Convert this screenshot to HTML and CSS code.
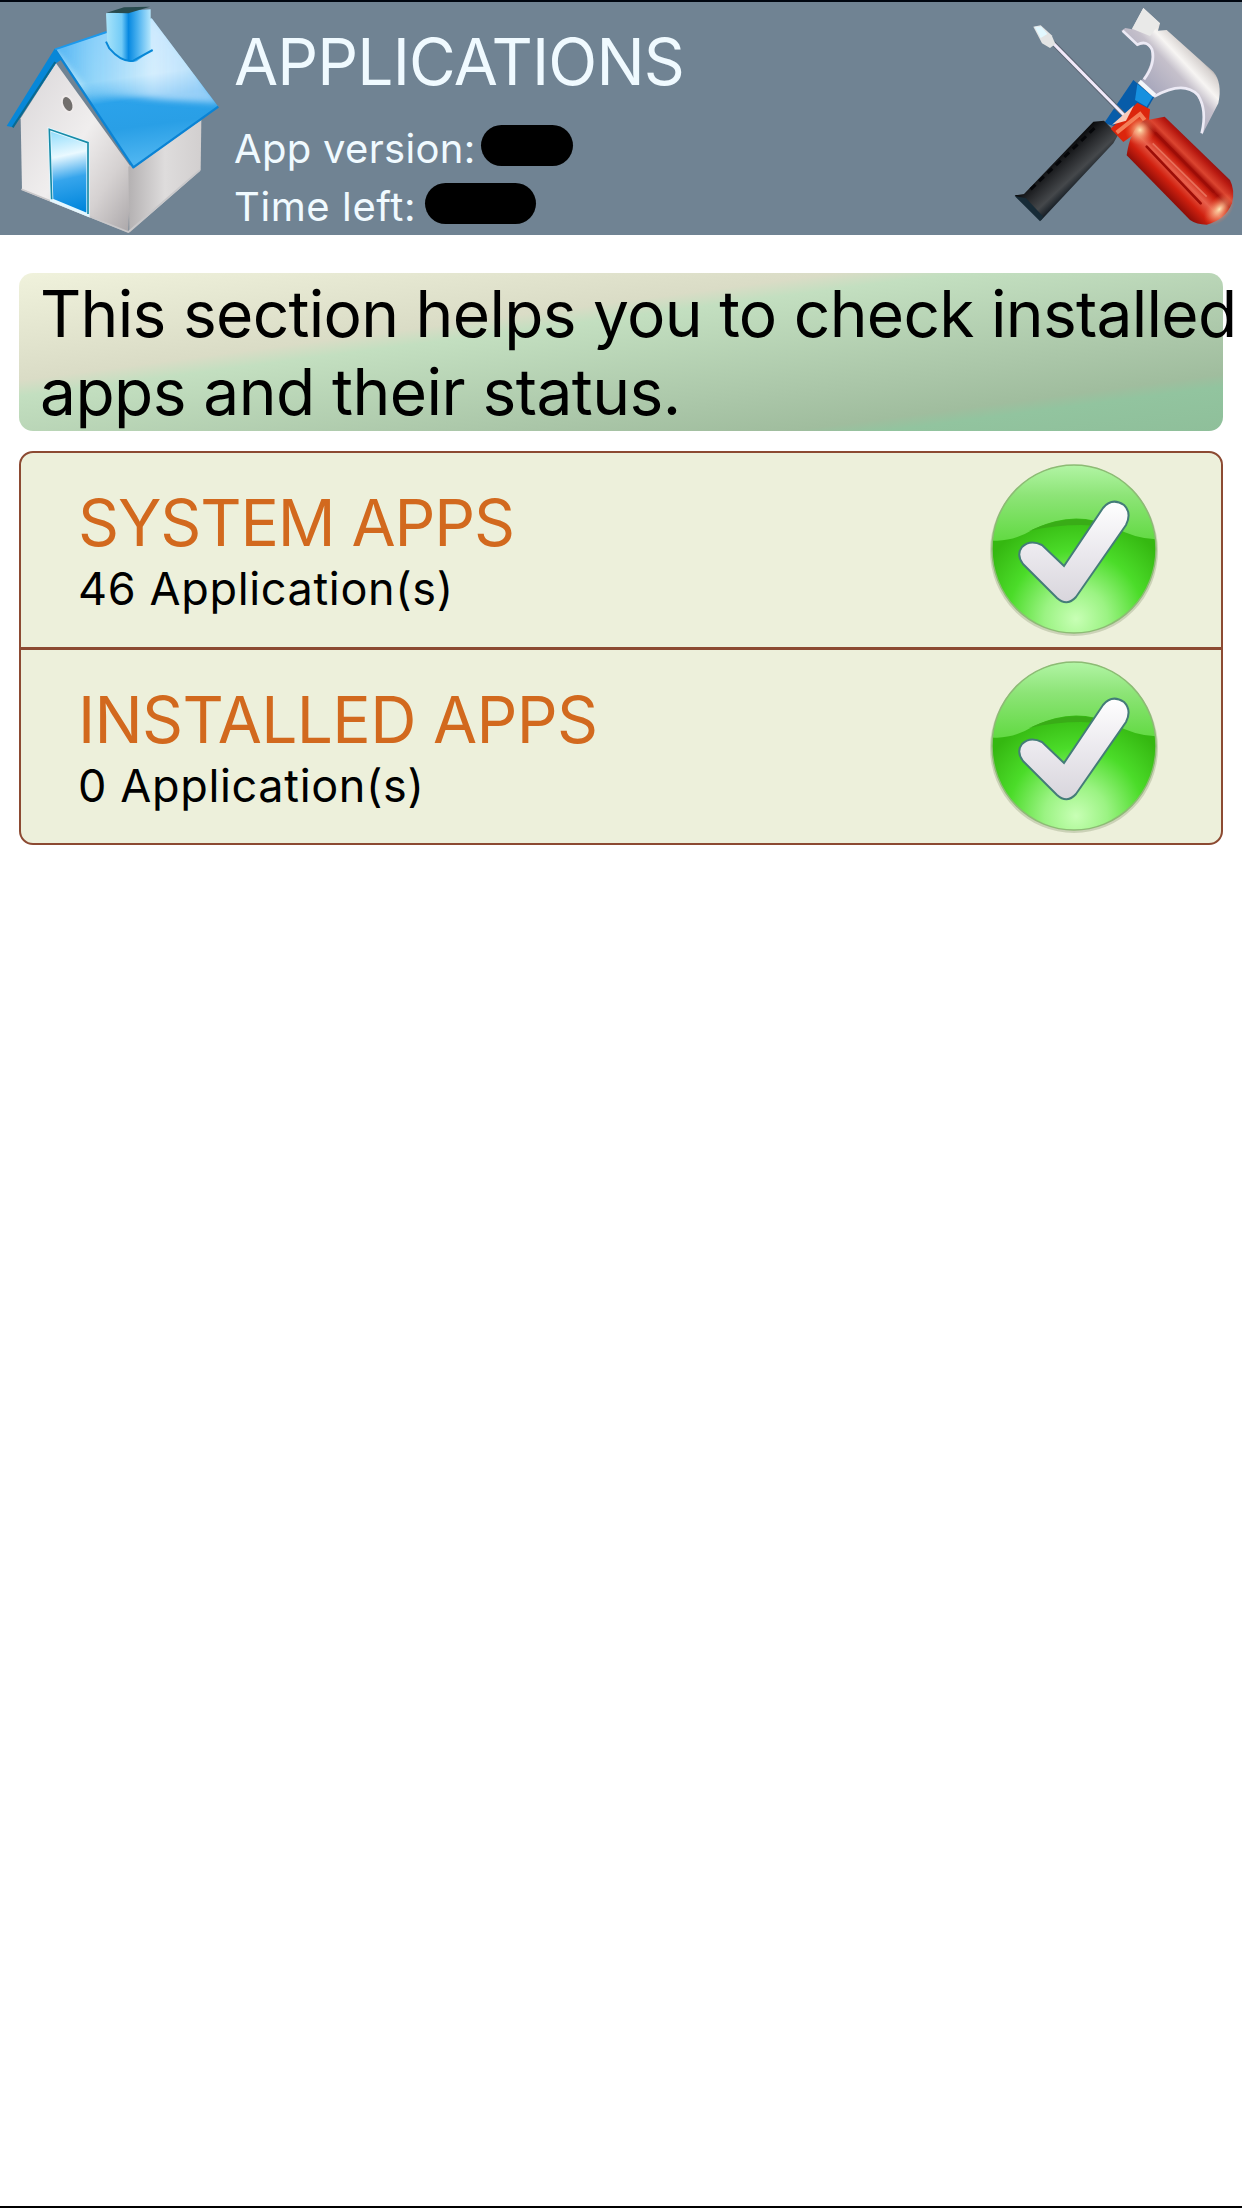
FILE: index.html
```
<!DOCTYPE html>
<html lang="en">
<head>
<meta charset="utf-8">
<title>Applications</title>
<link rel="stylesheet" href="styles.css">
</head>
<body>
<header class="header">
  <svg class="home" viewBox="0 6 690 699" aria-label="Home">
    <defs>
      <linearGradient id="roof" x1="0" y1="0" x2="0.15" y2="1">
        <stop offset="0" stop-color="#8fd6fb"/><stop offset=".2" stop-color="#a5dcfb"/><stop offset=".45" stop-color="#b4e5fa"/><stop offset=".6" stop-color="#2ba2ea"/><stop offset=".78" stop-color="#299fe6"/><stop offset="1" stop-color="#4cb4f0"/>
      </linearGradient>
      <linearGradient id="shine" x1="0" y1="0" x2="1" y2="0">
        <stop offset="0" stop-color="#2aa0ee"/><stop offset=".25" stop-color="#6cc3f7" stop-opacity=".6"/><stop offset=".6" stop-color="#e8f3ff" stop-opacity=".8"/><stop offset="1" stop-color="#a5d5fa"/>
      </linearGradient>
      <linearGradient id="front" x1="0" y1="0" x2="1" y2="1">
        <stop offset="0" stop-color="#d9d6d8"/><stop offset=".5" stop-color="#f0eeee"/><stop offset=".75" stop-color="#d5d1d1"/><stop offset="1" stop-color="#aaa6a8"/>
      </linearGradient>
      <linearGradient id="side" x1="0" y1="0" x2="1" y2="0">
        <stop offset="0" stop-color="#b4b1b2"/><stop offset=".5" stop-color="#dedcdc"/><stop offset="1" stop-color="#d2cfcf"/>
      </linearGradient>
      <linearGradient id="door" x1="0.2" y1="0" x2="0.3" y2="1">
        <stop offset="0" stop-color="#8fdcfb"/><stop offset=".32" stop-color="#eaf9ff"/><stop offset=".6" stop-color="#36a5ec"/><stop offset="1" stop-color="#0086dc"/>
      </linearGradient>
      <linearGradient id="stack" x1="0" y1="0" x2="1" y2="0">
        <stop offset="0" stop-color="#a9e4fa"/><stop offset=".35" stop-color="#72cbf7"/><stop offset=".5" stop-color="#0789e1"/><stop offset=".7" stop-color="#49b0ef"/><stop offset="1" stop-color="#b8e8fd"/>
      </linearGradient>
      <filter id="soft"><feGaussianBlur stdDeviation="9"/></filter>
      <clipPath id="roofClip"><path d="M165 148 455 55 655 320 400 505Z"/></clipPath>
    </defs>
    <path d="M168 190 62 355 66 570 385 698 392 500Z" fill="url(#front)"/>
    <path d="M385 500 604 360 602 510 388 698Z" fill="url(#side)"/>
    <path d="M64 568 385 696 600 510" fill="none" stroke="#c9c8ca" stroke-width="5"/>
    <path d="M165 148 455 55 655 320 400 505Z" fill="url(#roof)"/>
    <g clip-path="url(#roofClip)">
      <path d="M150 130 330 80 455 40 660 310 500 300 270 280Z" fill="url(#shine)" opacity=".8" filter="url(#soft)"/>
    </g>
    <path d="M165 148 400 502 655 320" fill="none" stroke="#0b83d4" stroke-width="7" stroke-linejoin="round"/>
    <path d="M165 148 320 96" stroke="#1c99ec" stroke-width="6"/>
    <path d="M164 146 186 178 168 190 40 382 20 378Z" fill="#0787d8"/>
    <path d="M166 186 38 382" stroke="#096a91" stroke-width="6"/>
    <path d="M318 40 385 32 452 28 452 145Q460 150 410 184Q385 190 360 172L322 135Z" fill="url(#stack)"/>
    <path d="M320 38 372 22 450 20 385 40Z" fill="#284b4e"/>
    <path d="M318 125 328 145Q365 188 400 182L458 150" fill="none" stroke="#0787d7" stroke-width="6"/>
    <ellipse cx="203" cy="312" rx="16" ry="25" transform="rotate(-22 203 312)" fill="#716e6c" stroke="#eeeaea" stroke-width="6"/>
    <path d="M148 388 264 428 264 645 155 600Z" fill="url(#door)" stroke="#e4f7ff" stroke-width="10"/>
    <path d="M155 598 148 388 264 428 264 642" fill="none" stroke="#178ba7" stroke-width="5"/>
  </svg>
  <div class="heading">
    <h1 class="title">APPLICATIONS</h1>
    <p class="meta meta-version">App version:<i class="mask"></i></p>
    <p class="meta meta-time">Time left:<i class="mask"></i></p>
  </div>
  <svg class="tools" viewBox="0 6 726 699" aria-label="Tools">
    <defs>
      <linearGradient id="steel" gradientUnits="userSpaceOnUse" x1="450" y1="260" x2="590" y2="130">
        <stop offset="0" stop-color="#aaa9bd"/><stop offset=".45" stop-color="#c5c0cb"/><stop offset=".65" stop-color="#f7f5f3"/><stop offset=".85" stop-color="#d6d1cf"/><stop offset="1" stop-color="#77706f"/>
      </linearGradient>
      <linearGradient id="red" gradientUnits="userSpaceOnUse" x1="470" y1="560" x2="600" y2="430">
        <stop offset="0" stop-color="#8b0d08"/><stop offset=".2" stop-color="#d0200f"/><stop offset=".38" stop-color="#e8604c"/><stop offset=".52" stop-color="#cc2312"/><stop offset=".6" stop-color="#a00c07"/><stop offset=".7" stop-color="#dc4530"/><stop offset=".85" stop-color="#b81910"/><stop offset="1" stop-color="#780b12"/>
      </linearGradient>
      <linearGradient id="grip" gradientUnits="userSpaceOnUse" x1="170" y1="470" x2="245" y2="550">
        <stop offset="0" stop-color="#0a0b0d"/><stop offset=".35" stop-color="#292b2e"/><stop offset=".7" stop-color="#45484b"/><stop offset="1" stop-color="#101820"/>
      </linearGradient>
      <radialGradient id="glint"><stop offset="0" stop-color="#ffe9b8"/><stop offset="1" stop-color="#f26a43" stop-opacity="0"/></radialGradient>
    </defs>
    <path d="M430 24 480 70 474 92 500 90 640 215Q668 248 655 310L606 405Q624 330 585 280Q540 240 460 292L420 248Q464 190 452 148Q442 126 412 138L364 92 376 84 396 88Z" fill="url(#steel)"/>
    <path d="M396 86 430 24 480 70 450 108Z" fill="#e9e9e8"/>
    <path d="M368 92 412 134Q440 118 456 148Q468 190 432 238M462 290Q550 240 594 285Q622 330 605 400" fill="none" stroke="#eceaf5" stroke-width="8"/>
    <path d="M400 240 462 292 440 330 350 380 312 370Z" fill="#075ca9"/>
    <path d="M412 252 458 290 440 320 405 300Z" fill="#1690df"/>
    <path d="M418 244 464 286" stroke="#f3f6fa" stroke-width="13"/>
    <path d="M280 365 312 362 354 405 340 430 122 662 44 586 72 582Z" fill="url(#grip)"/>
    <path d="M92 568 290 378" stroke="#050609" stroke-width="9" stroke-dasharray="20 15"/>
    <path d="M44 588 78 595 130 650 120 664Z" fill="#172b37"/>
    <path d="M160 130 372 345" stroke="#5a6371" stroke-width="15"/>
    <path d="M160 130 372 345" stroke="#f0e9fa" stroke-width="9"/>
    <path d="M100 80 122 76 155 106 166 132 150 144 126 130Z" fill="#e3e4e4"/>
    <path d="M104 80 124 80 142 102 122 114Z" fill="#e2f8ff"/>
    <path d="M332 386 412 308 450 328 446 372 370 426Z" fill="#dc260c"/>
    <path d="M336 374 402 316 378 362Z" fill="#f8cbbb"/>
    <path d="M350 398 420 342 434 360" fill="none" stroke="#f47e58" stroke-width="12"/>
    <path d="M430 362 494 350 690 540Q706 572 696 610Q676 660 620 674Q590 674 570 660L380 466Q390 390 430 362Z" fill="url(#red)"/>
    <path d="M468 400 640 575M440 440 602 610" stroke="#9d0d07" stroke-width="8" stroke-linecap="round"/>
    <path d="M458 430 620 590" stroke="#e8705a" stroke-width="5"/>
    <circle cx="420" cy="390" r="46" fill="url(#glint)"/>
    <ellipse cx="658" cy="628" rx="58" ry="35" transform="rotate(-48 658 628)" fill="url(#glint)"/>
  </svg>
</header>
<main class="content">
  <p class="intro">This section helps you to check installed<br><span class="intro-end">apps and their status.</span></p>
  <ul class="groups">
    <li class="group system">
      <div class="label">
        <h2 class="name">SYSTEM APPS</h2>
        <p class="count">46 Application(s)</p>
      </div>
      <svg class="check" viewBox="0 0 180 180"><use href="#ok"/></svg>
    </li>
    <li class="group installed">
      <div class="label">
        <h2 class="name">INSTALLED APPS</h2>
        <p class="count">0 Application(s)</p>
      </div>
      <svg class="check" viewBox="0 0 180 180"><use href="#ok"/></svg>
    </li>
  </ul>
</main>
<svg class="sprite" width="0" height="0">
  <defs>
    <radialGradient id="ball" gradientUnits="userSpaceOnUse" cx="92" cy="160" r="105">
      <stop offset="0" stop-color="#c8ffb5"/><stop offset=".3" stop-color="#9bf383"/><stop offset=".65" stop-color="#4bdc29"/><stop offset="1" stop-color="#35b811"/>
    </radialGradient>
    <linearGradient id="gloss" x1="0" y1="0" x2="0" y2="1">
      <stop offset="0" stop-color="#b9f8ae"/><stop offset=".45" stop-color="#8de477"/><stop offset="1" stop-color="#62da43"/>
    </linearGradient>
    <linearGradient id="tick" x1="0" y1="0" x2="0" y2="1">
      <stop offset="0" stop-color="#ffffff"/><stop offset=".5" stop-color="#ebe9ee"/><stop offset="1" stop-color="#d8d5dc"/>
    </linearGradient>
    <clipPath id="disc"><ellipse cx="90" cy="90" rx="82" ry="84"/></clipPath>
    <g id="ok">
      <ellipse cx="90" cy="92" rx="84" ry="85" fill="#8b9b76" opacity=".35"/>
      <ellipse cx="90" cy="90" rx="82" ry="84" fill="url(#ball)"/>
      <path clip-path="url(#disc)" d="M0 80Q24 86 50 70Q90 50 130 68Q155 82 180 80V0H0Z" fill="url(#gloss)"/>
      <path d="M45 72Q90 50 132 69Q90 62 45 72Z" fill="#39ac17"/>
      <ellipse cx="90" cy="90" rx="82" ry="84" fill="none" stroke="#8dbb75" stroke-width="1.500"/>
      <path d="M38 88Q46 80 58 86L80 107 119 49Q128 38 140 46Q148 54 142 66L92 138Q83 148 73 139L39 105Q32 96 38 88Z" fill="url(#tick)" stroke="#447c78" stroke-width="2"/>
    </g>
  </defs>
</svg>
</body>
</html>
```
FILE: styles.css
```
* { box-sizing: border-box; margin: 0; padding: 0; }
body {
  min-height: 2208px;
  background: #fff;
  border-top: 2px solid #000610;
  border-bottom: 2px solid #000;
  font-family: Inter, "Liberation Sans", sans-serif;
  color: #000;
}
.header {
  display: flex;
  height: 233px;
  background: #708393;
  color: #f0faff;
}
.home { width: 230px; height: 233px; flex: none; }
.tools { width: 242px; height: 233px; flex: none; }
.heading { flex: 1; padding: 20px 0 0 4px; white-space: nowrap; }
.title { font-size: 64px; font-weight: 400; line-height: 80px; letter-spacing: -0.85px; }
.meta { display: flex; align-items: center; font-size: 40px; line-height: 58px; }
.meta-version { margin-top: 18px; letter-spacing: 0.3px; }
.meta-time { letter-spacing: 0.6px; }
.mask { height: 41px; margin: 0 0 7px 9px; border-radius: 21px; background: #000; }
.meta-version .mask { width: 92px; margin-left: 6px; }
.meta-time .mask { width: 111px; }
.content { padding: 38px 19px 0; }
.intro {
  height: 158px;
  padding: 2px 0 0 21px;
  border-radius: 14px;
  background: linear-gradient(to bottom right, #f0f2dc 0%, #dadcc6 34%, #c3dfc0 39%, #aac6a8 70%, #a0bd9e 82%, #92c49f 86%, #8fbf9a 100%);
  font-size: 64px;
  line-height: 78px;
  letter-spacing: -0.7px;
  white-space: nowrap;
}
.intro-end { letter-spacing: -0.55px; }
.groups {
  height: 394px;
  margin-top: 20px;
  list-style: none;
  border: 2px solid #8c4a32;
  border-radius: 14px;
  background: #edf0db;
}
.group { display: flex; height: 194px; align-items: center; justify-content: space-between; padding: 1px 57px 0; }
.group + .group { border-top: 3px solid #8c4a32; height: 197px; }
.name { font-size: 64px; font-weight: 400; line-height: 76px; color: #d2691e; }
.count { font-size: 45px; line-height: 56px; letter-spacing: 0.65px; }
.system .name { letter-spacing: -1.1px; }
.installed .name { letter-spacing: -0.65px; }
.check { width: 180px; height: 180px; margin-bottom: 4px; }
.sprite { display: block; }
```
